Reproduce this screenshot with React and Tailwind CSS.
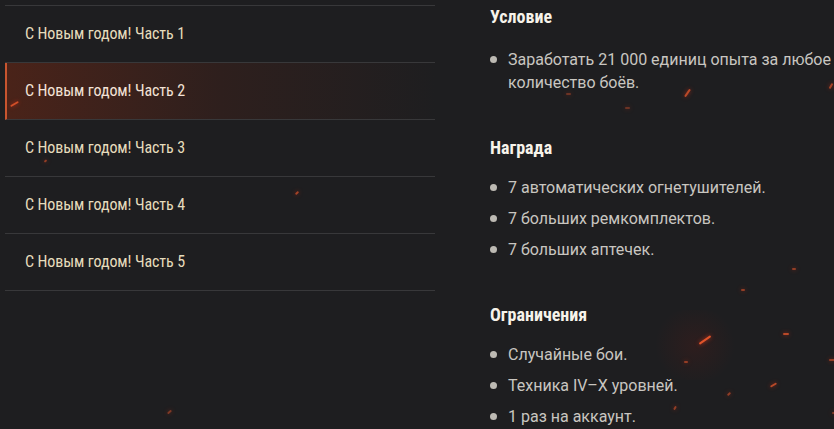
const parts = [1, 2, 3, 4, 5];

const sections = [
  {
    title: "Условие",
    items: ["Заработать 21 000 единиц опыта за любое количество боёв."],
  },
  {
    title: "Награда",
    items: [
      "7 автоматических огнетушителей.",
      "7 больших ремкомплектов.",
      "7 больших аптечек.",
    ],
  },
  {
    title: "Ограничения",
    items: ["Случайные бои.", "Техника IV–X уровней.", "1 раз на аккаунт."],
  },
];

// sparks: [left, top, width, rotate, opacity]
const sparks = [
  [10, 103, 9, -30, 0.9],
  [44, 160, 3, -40, 0.6],
  [295, 192, 4, -40, 0.7],
  [167, 411, 5, -40, 0.5],
  [683, 92, 9, -55, 0.8],
  [566, 93, 5, 0, 0.4],
  [625, 107, 5, 0, 0.4],
  [828, 85, 6, -60, 0.7],
  [792, 268, 4, 0, 0.6],
  [741, 289, 4, 0, 0.6],
  [698, 339, 14, -35, 1],
  [783, 333, 6, 0, 0.8],
  [684, 361, 4, 0, 0.6],
  [829, 359, 6, 0, 0.6],
  [770, 384, 7, -30, 0.8],
  [727, 393, 4, -40, 0.6],
  [673, 407, 4, -60, 0.6],
  [832, 412, 4, 0, 0.5],
];

const condensed =
  "font-['Roboto_Condensed','Liberation_Sans_Narrow','DejaVu_Sans_Condensed',sans-serif]";

function MenuItem({ n, active }) {
  return (
    <div
      className={
        "flex h-[57px] items-center border-b border-[#38383a] pl-5 " +
        (active
          ? "border-l-2 border-l-[#c8552f] bg-gradient-to-r from-[#4a2319] via-[#2e1f1d] to-[#1e1e20] pl-[18px] text-[#f3e2d6]"
          : "text-[#e6dcbc]")
      }
    >
      <span className={condensed + " text-[16px] tracking-[-0.1px]"}>
        С Новым годом! Часть {n}
      </span>
    </div>
  );
}

export default function App() {
  return (
    <div className="relative h-[429px] w-[834px] overflow-hidden bg-[#1e1e20] font-['Roboto',sans-serif]">
      <div className="pointer-events-none absolute left-[650px] top-[310px] h-[70px] w-[90px] rounded-full bg-[radial-gradient(circle,rgba(140,25,15,0.14),transparent_70%)]" />

      <div className="relative flex">
        <div className="ml-[5px] mt-[5px] w-[430px] border-t border-[#38383a]">
          {parts.map((n) => (
            <MenuItem key={n} n={n} active={n === 2} />
          ))}
        </div>

        <div className="ml-[55px] mt-[5px] flex-1">
          {sections.map((section, index) => (
            <div key={section.title} className="mb-[42px]">
              <h3 className={condensed + " text-[18px] font-bold leading-[24px] text-[#f7f3ea]"}>
                {section.title}
              </h3>

              <ul className={(index === 0 ? "mt-[19px]" : "mt-[16px]") + " space-y-[8px]"}>
                {section.items.map((item) => (
                  <li
                    key={item}
                    className="flex text-[16px] leading-[23px] text-[#c9c6c0]"
                  >
                    <span className="mr-[11px] mt-[8px] h-[7px] w-[7px] shrink-0 rounded-full bg-[#bdbab3]" />
                    <span>{item}</span>
                  </li>
                ))}
              </ul>
            </div>
          ))}
        </div>
      </div>

      {sparks.map(([left, top, width, rotate, opacity], i) => (
        <span
          key={i}
          className="pointer-events-none absolute h-[2px] rounded-full bg-[#e0542a] shadow-[0_0_4px_#c0301a]"
          style={{
            left,
            top,
            width,
            opacity,
            transform: `rotate(${rotate}deg)`,
          }}
        />
      ))}
    </div>
  );
}
